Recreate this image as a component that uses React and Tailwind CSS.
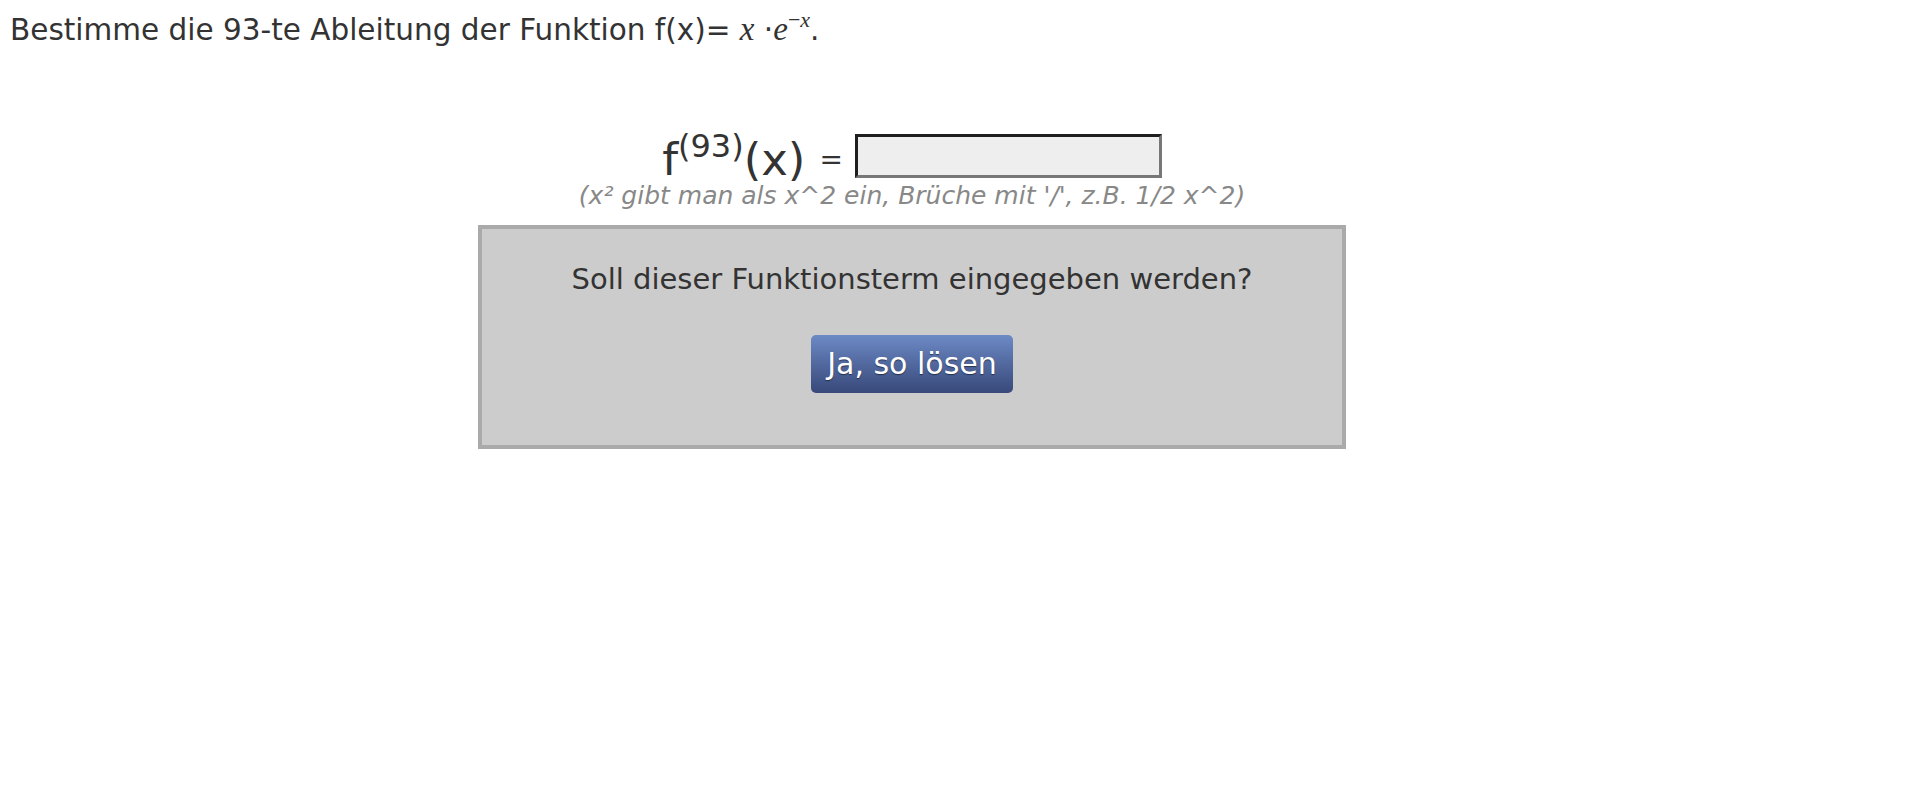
import React from 'react';

const sans = { fontFamily: '"DejaVu Sans", Verdana, sans-serif' };

export default function App() {
    return (
        <div className="min-h-[810px] w-full bg-white text-[#333]" style={sans}>

            <div className="pl-[10px] pt-[12px] text-[29.5px] leading-[34px] whitespace-nowrap">
                Bestimme die 93-te Ableitung der Funktion f(x)={' '}
                <span className="italic text-[33px] font-['Liberation_Serif',serif]">x</span>
                <span> ·</span>
                <span className="italic text-[33px] font-['Liberation_Serif',serif]">e</span>
                <sup className="text-[22px] font-['Liberation_Serif',serif] relative -top-[13px]">
                    <span className="not-italic">−</span><span className="italic">x</span>
                </sup>
                <span>.</span>
            </div>


            <div className="w-[1824px] flex flex-col items-center mt-[87px]">

                <div className="flex items-end h-[44px]">
                    <span className="text-[45px] leading-[42px] whitespace-nowrap relative top-[3px]">
                        f<sup className="text-[32px] relative -top-[18px]">(93)</sup>(x)
                    </span>
                    <span className="text-[28px] leading-[30px] ml-[14px] mr-[12px] mb-[3px]">=</span>
                    <input
                        type="text"
                        className="w-[307px] h-[44px] bg-[#eeeeee] border-[3px] border-t-[#1e1e1e] border-l-[#1e1e1e] border-b-[#777777] border-r-[#777777] outline-none"
                    />
                </div>

                <div className="mt-[4px] text-[25px] leading-[28px] italic text-[#888888] whitespace-nowrap">
                    (x² gibt man als x^2 ein, Brüche mit '/', z.B. 1/2 x^2)
                </div>


                <div className="mt-[15px] w-[868px] h-[224px] bg-[#cccccc] border-4 border-[#aaaaaa] flex flex-col items-center pt-[33px]">
                    <div className="text-[29px] leading-[34px] whitespace-nowrap">
                        Soll dieser Funktionsterm eingegeben werden?
                    </div>
                    <button
                        className="mt-[39px] w-[202px] h-[58px] rounded-[5px] bg-gradient-to-b from-[#6d8ac6] to-[#38497a] text-white text-[30px] leading-[34px] [text-shadow:0_1px_1px_rgba(0,0,0,0.5)]"
                    >
                        Ja, so lösen
                    </button>
                </div>
            </div>
        </div>
    );
}
